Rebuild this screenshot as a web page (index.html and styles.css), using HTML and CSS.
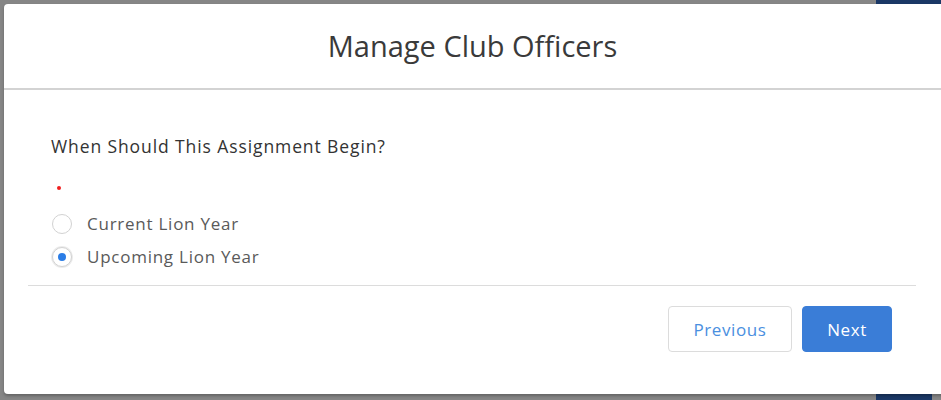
FILE: index.html
```html
<!DOCTYPE html>
<html lang="en">
<head>
<meta charset="utf-8">
<title>Manage Club Officers</title>
<link rel="stylesheet" href="styles.css">
</head>
<body>
<div class="backdrop">
  <div class="bg-chip bg-chip-top"></div>
  <div class="bg-chip bg-chip-bottom"></div>
</div>
<div class="modal">
  <header class="modal-header">
    <h2 class="modal-title">Manage Club Officers</h2>
  </header>
  <div class="modal-body">
    <div class="form">
      <p class="question">When Should This Assignment Begin?</p>
      <span class="required-dot"></span>
      <label class="radio">
        <span class="radio-circle"></span>
        <span class="radio-label">Current Lion Year</span>
      </label>
      <label class="radio checked">
        <span class="radio-circle"></span>
        <span class="radio-label">Upcoming Lion Year</span>
      </label>
    </div>
    <div class="divider"></div>
    <div class="footer">
      <button class="btn btn-neutral">Previous</button>
      <button class="btn btn-brand">Next</button>
    </div>
  </div>
</div>
</body>
</html>
```
FILE: styles.css
```css
html, body {
  margin: 0;
  padding: 0;
  width: 941px;
  height: 400px;
  overflow: hidden;
}
body {
  background: #858585;
  font-family: "Open Sans", "Liberation Sans", sans-serif;
  position: relative;
}
.backdrop {
  position: absolute;
  inset: 0;
  background: #868686;
}
.bg-chip {
  position: absolute;
  background: #1b3866;
}
.bg-chip-top {
  left: 876px;
  top: 0;
  width: 65px;
  height: 6px;
}
.bg-chip-bottom {
  left: 876px;
  bottom: 0;
  width: 56px;
  height: 8px;
}
.modal {
  position: relative;
  margin: 4px 0 0 4px;
  width: 945px;
  height: 390px;
  background: #fff;
  border-radius: 4px;
  box-shadow: 0 2px 3px rgba(0,0,0,0.25);
}
.modal-header {
  height: 84px;
  border-bottom: 2px solid #d3d3d3;
  display: flex;
  align-items: center;
  justify-content: center;
  padding-right: 8px;
}
.modal-title {
  margin: 0;
  font-weight: 400;
  font-size: 29px;
  color: #3a3a3a;
  letter-spacing: 0;
  position: relative;
  top: -1px;
}
.modal-body {
  padding: 0 33px 0 24px;
}
.form {
  padding: 45px 0 0 23px;
  height: 150px;
  display: flex;
  flex-direction: column;
  align-items: flex-start;
}
.question {
  margin: 0;
  font-size: 17.5px;
  line-height: 22px;
  color: #333;
  letter-spacing: 0.9px;
}
.required-dot {
  display: block;
  width: 4px;
  height: 4px;
  border-radius: 50%;
  background: #f01e1e;
  margin: 29px 0 0 6px;
}
.radio {
  display: flex;
  align-items: center;
  gap: 15px;
  height: 33px;
  margin-left: 1px;
}
.radio:first-of-type {
  margin-top: 17px;
}
.radio-circle {
  width: 20px;
  height: 20px;
  box-sizing: border-box;
  border: 1px solid #d2d2d2;
  border-radius: 50%;
  background: #fff;
  display: flex;
  align-items: center;
  justify-content: center;
  flex: none;
}
.radio.checked .radio-circle {
  box-shadow: 0 0 0 1px #ececec;
}
.radio.checked .radio-circle::after {
  content: "";
  width: 8px;
  height: 8px;
  border-radius: 50%;
  background: #2b7de6;
}
.radio-label {
  font-size: 17px;
  color: #5a5a5a;
  letter-spacing: 0.75px;
}
.divider {
  height: 1px;
  background: #dcdcdc;
  margin-top: 0;
}
.footer {
  display: flex;
  justify-content: flex-end;
  gap: 10px;
  padding: 20px 24px 0 0;
}
.btn {
  height: 46px;
  border-radius: 4px;
  font-family: "Open Sans", "Liberation Sans", sans-serif;
  font-size: 17px;
  letter-spacing: 0.6px;
  cursor: pointer;
  padding: 0;
}
.btn-neutral {
  width: 124px;
  background: #fff;
  border: 1px solid #dcdcdc;
  color: #4a8fe0;
}
.btn-brand {
  width: 90px;
  background: #3a7dd7;
  border: 1px solid #3a7dd7;
  color: #fff;
}
```
